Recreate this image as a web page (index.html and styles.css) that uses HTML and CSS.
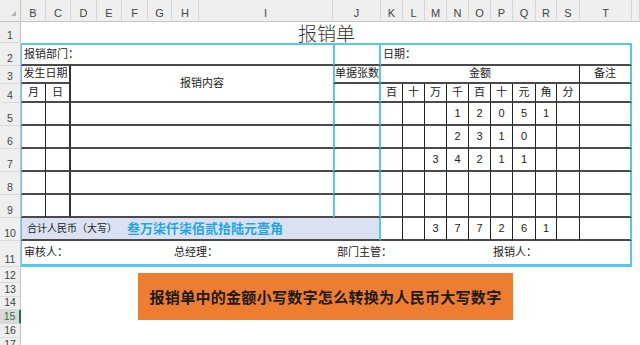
FILE: index.html
```html
<!DOCTYPE html>
<html lang="zh">
<head>
<meta charset="utf-8">
<title>报销单</title>
<link rel="stylesheet" href="styles.css">
</head>
<body>
<div class="page">
  <div class="sheet">
    <!-- column headers -->
    <div class="corner"><span class="tri"></span></div>
    <div class="ch">B</div><div class="ch">C</div><div class="ch">D</div><div class="ch">E</div>
    <div class="ch">F</div><div class="ch">G</div><div class="ch">H</div><div class="ch">I</div>
    <div class="ch">J</div><div class="ch">K</div><div class="ch">L</div><div class="ch">M</div>
    <div class="ch">N</div><div class="ch">O</div><div class="ch">P</div><div class="ch">Q</div>
    <div class="ch">R</div><div class="ch">S</div><div class="ch">T</div><div class="ch"></div>

    <!-- row 1 -->
    <div class="rh">1</div>
    <div class="c s19 title">报销单</div>
    <div class="c"></div>

    <!-- row 2 -->
    <div class="rh">2</div>
    <div class="c s8 l fl ct hb">报销部门：</div>
    <div class="c ct cl cr hb"></div>
    <div class="c s10 l ct hb fr">日期：</div>
    <div class="c"></div>

    <!-- row 3 -->
    <div class="rh">3</div>
    <div class="c s2 fl hb vr2">发生日期</div>
    <div class="c s6 r2 hb">报销内容</div>
    <div class="c cl cr hb">单据张数</div>
    <div class="c s9 hb vr">金额</div>
    <div class="c hb fr">备注</div>
    <div class="c"></div>

    <!-- row 4 -->
    <div class="rh">4</div>
    <div class="c fl hb vr">月</div>
    <div class="c hb vr2">日</div>
    <div class="c cl cr hb"></div>
    <div class="c hb vr">百</div><div class="c hb vr">十</div><div class="c hb vr">万</div>
    <div class="c hb vr">千</div><div class="c hb vr">百</div><div class="c hb vr">十</div>
    <div class="c hb vr">元</div><div class="c hb vr">角</div><div class="c hb vr">分</div>
    <div class="c hb fr"></div>
    <div class="c"></div>

    <!-- row 5 -->
    <div class="rh">5</div>
    <div class="c fl hb vr"></div>
    <div class="c hb vr2"></div>
    <div class="c s6 hb"></div>
    <div class="c cl cr hb"></div>
    <div class="c hb vr"></div><div class="c hb vr"></div><div class="c hb vr"></div>
    <div class="c hb vr">1</div><div class="c hb vr">2</div><div class="c hb vr">0</div>
    <div class="c hb vr">5</div><div class="c hb vr">1</div><div class="c hb vr"></div>
    <div class="c hb fr"></div>
    <div class="c"></div>

    <!-- row 6 -->
    <div class="rh">6</div>
    <div class="c fl hb vr"></div>
    <div class="c hb vr2"></div>
    <div class="c s6 hb"></div>
    <div class="c cl cr hb"></div>
    <div class="c hb vr"></div><div class="c hb vr"></div><div class="c hb vr"></div>
    <div class="c hb vr">2</div><div class="c hb vr">3</div><div class="c hb vr">1</div>
    <div class="c hb vr">0</div><div class="c hb vr"></div><div class="c hb vr"></div>
    <div class="c hb fr"></div>
    <div class="c"></div>

    <!-- row 7 -->
    <div class="rh">7</div>
    <div class="c fl hb vr"></div>
    <div class="c hb vr2"></div>
    <div class="c s6 hb"></div>
    <div class="c cl cr hb"></div>
    <div class="c hb vr"></div><div class="c hb vr"></div><div class="c hb vr">3</div>
    <div class="c hb vr">4</div><div class="c hb vr">2</div><div class="c hb vr">1</div>
    <div class="c hb vr">1</div><div class="c hb vr"></div><div class="c hb vr"></div>
    <div class="c hb fr"></div>
    <div class="c"></div>

    <!-- row 8 -->
    <div class="rh">8</div>
    <div class="c fl hb vr"></div>
    <div class="c hb vr2"></div>
    <div class="c s6 hb"></div>
    <div class="c cl cr hb"></div>
    <div class="c hb vr"></div><div class="c hb vr"></div><div class="c hb vr"></div>
    <div class="c hb vr"></div><div class="c hb vr"></div><div class="c hb vr"></div>
    <div class="c hb vr"></div><div class="c hb vr"></div><div class="c hb vr"></div>
    <div class="c hb fr"></div>
    <div class="c"></div>

    <!-- row 9 -->
    <div class="rh">9</div>
    <div class="c fl hb vr"></div>
    <div class="c hb vr2"></div>
    <div class="c s6 hb"></div>
    <div class="c cl cr hb"></div>
    <div class="c hb vr"></div><div class="c hb vr"></div><div class="c hb vr"></div>
    <div class="c hb vr"></div><div class="c hb vr"></div><div class="c hb vr"></div>
    <div class="c hb vr"></div><div class="c hb vr"></div><div class="c hb vr"></div>
    <div class="c hb fr"></div>
    <div class="c"></div>

    <!-- row 10 -->
    <div class="rh">10</div>
    <div class="c s9 l fl cr hb sum">
      <span class="sum-label">合计人民币（大写）</span>
      <span class="sum-value">叁万柒仟柒佰贰拾陆元壹角</span>
    </div>
    <div class="c hb vr"></div><div class="c hb vr"></div><div class="c hb vr">3</div>
    <div class="c hb vr">7</div><div class="c hb vr">7</div><div class="c hb vr">2</div>
    <div class="c hb vr">6</div><div class="c hb vr">1</div><div class="c hb vr"></div>
    <div class="c hb fr"></div>
    <div class="c"></div>

    <!-- row 11 -->
    <div class="rh">11</div>
    <div class="c s6 l fl cb">审核人：</div>
    <div class="c s2 l cb">总经理：</div>
    <div class="c s6 l cb p4">部门主管：</div>
    <div class="c s5 l cb fr">报销人：</div>
    <div class="c"></div>

    <!-- rows 12-17 -->
    <div class="rh">12</div><div class="c s20"></div>
    <div class="rh">13</div><div class="c s20"></div>
    <div class="rh">14</div><div class="c s20"></div>
    <div class="rh act">15</div><div class="c s20"></div>
    <div class="rh">16</div><div class="c s20"></div>
    <div class="rh">17</div><div class="c s20"></div>
  </div>

  <div class="banner">报销单中的金额小写数字怎么转换为人民币大写数字</div>
</div>
</body>
</html>
```

FILE: styles.css
```css
html, body {
  margin: 0;
  padding: 0;
  background: #ffffff;
}

body {
  width: 640px;
  height: 345px;
  overflow: hidden;
}

.page {
  position: relative;
  width: 640px;
  height: 345px;
  overflow: hidden;
}

.sheet {
  display: grid;
  width: 640px;
  grid-template-columns:
    21px 25px 25px 26px 25px 26px 24px 27px 134px 48px
    22px 22px 22px 22px 22px 22px 23px 21px 23px 52px 1fr;
  grid-template-rows:
    22px 21px 23px 18px 19px
    23px 23px 23px 23px 23px 23px
    26px 16px 14px 13px 14px 14px 14px;
}

/* headers */
.corner,
.ch,
.rh {
  box-sizing: border-box;
  background: #efefef;
  font-family: "Liberation Sans", Arial, sans-serif;
  color: #444444;
  display: flex;
}

.corner {
  justify-content: flex-end;
  align-items: flex-end;
  padding: 0 4px 5px 0;
  border-right: 1px solid #c4c4c4;
  border-bottom: 1px solid #c4c4c4;
}

.tri {
  width: 0;
  height: 0;
  border-left: 5px solid transparent;
  border-bottom: 5px solid #b5b5b5;
}

.ch {
  font-size: 11px;
  align-items: center;
  justify-content: center;
  padding-top: 4px;
  border-right: 1px solid #d6d6d6;
  border-bottom: 1px solid #c4c4c4;
}

.rh {
  font-size: 10.5px;
  align-items: flex-end;
  justify-content: center;
  padding-bottom: 1px;
  border-right: 1px solid #c4c4c4;
  border-bottom: 1px solid #dadada;
}

.rh.act {
  background: #d9d9d9;
  color: #3d6b4f;
  border-right: 2px solid #217346;
}

/* cells */
.c {
  box-sizing: border-box;
  display: flex;
  align-items: center;
  justify-content: center;
  min-width: 0;
  overflow: hidden;
  white-space: nowrap;
  font-family: "Liberation Sans", "Noto Sans CJK SC", sans-serif;
  font-size: 11px;
  line-height: 1.2;
  color: #222222;
}

.l {
  justify-content: flex-start;
  padding-left: 2px;
}

.p4 {
  padding-left: 4px;
}

.s2 { grid-column: span 2; }
.s5 { grid-column: span 5; }
.s6 { grid-column: span 6; }
.s8 { grid-column: span 8; }
.s9 { grid-column: span 9; }
.s10 { grid-column: span 10; }
.s19 { grid-column: span 19; }
.s20 { grid-column: span 20; }
.r2 { grid-row: span 2; }

/* black table lines */
.hb { border-bottom: 2px solid #4a4a4a; }
.vr { border-right: 1px solid #222222; }
.vr2 { border-right: 2px solid #333333; }

/* cyan frame lines */
.ct { border-top: 2px solid #5cc5ea; }
.cb { border-bottom: 3px solid #5cc5ea; }
.cl { border-left: 2px solid #5cc5ea; }
.cr { border-right: 2px solid #5cc5ea; }
.fl { border-left: 1px solid #5cc5ea; }
.fr { border-right: 2px solid #5cc5ea; }

.title {
  overflow: visible;
  font-family: "Noto Sans CJK SC", sans-serif;
  font-size: 19px;
  font-weight: 300;
  line-height: 21px;
  color: #333333;
}

.sum {
  background: #d9e1f2;
  padding-left: 5px;
  padding-bottom: 2px;
  gap: 10px;
}

.sum-label {
  font-family: "Noto Sans CJK SC", sans-serif;
  font-size: 10px;
  color: #222222;
}

.sum-value {
  font-family: "Noto Sans CJK SC", sans-serif;
  font-size: 13px;
  font-weight: 700;
  color: #1fa5e4;
}

/* floating shape over the sheet */
.banner {
  position: absolute;
  left: 138px;
  top: 273px;
  width: 375px;
  height: 47px;
  background: #ed7d31;
  display: flex;
  align-items: center;
  justify-content: center;
  font-family: "Noto Sans CJK SC", sans-serif;
  font-size: 15px;
  font-weight: 700;
  letter-spacing: 0.3px;
  color: #1a1a1a;
}
```
